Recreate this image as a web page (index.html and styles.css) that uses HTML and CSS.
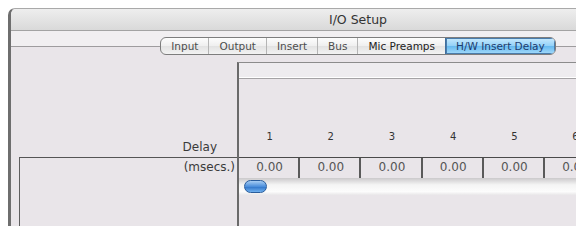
FILE: index.html
```html
<!DOCTYPE html>
<html lang="en">
<head>
  <meta charset="UTF-8">
  <title>I/O Setup</title>
  <link rel="stylesheet" href="styles.css">
</head>
<body>
  <div class="window">
    <div class="titlebar">I/O Setup</div>
    <div class="tabbar">
      <div class="tabs">
        <span class="tab">Input</span>
        <span class="tab">Output</span>
        <span class="tab">Insert</span>
        <span class="tab">Bus</span>
        <span class="tab strong">Mic Preamps</span>
        <span class="tab active">H/W Insert Delay</span>
      </div>
    </div>
    <div class="content">
      <div class="labels">
        <div class="label-head">Delay</div>
        <div class="label-box"><span>(msecs.)</span></div>
      </div>
      <div class="panel">
        <div class="panel-strip"></div>
        <div class="col-nums">
          <span>1</span><span>2</span><span>3</span><span>4</span><span>5</span><span>6</span>
        </div>
        <div class="values">
          <span>0.00</span><span>0.00</span><span>0.00</span><span>0.00</span><span>0.00</span><span>0.00</span>
        </div>
        <div class="scroll"><span class="thumb"></span></div>
      </div>
    </div>
  </div>
</body>
</html>
```

FILE: styles.css
```css
body {
  margin: 0;
  background: #fff;
  overflow: hidden;
  font-family: "DejaVu Sans", sans-serif;
}
.window {
  margin: 8px 0 0 8px;
  width: 697px;
  height: 218px;
  box-sizing: border-box;
  border-left: 3px solid #6e6e6e;
  border-top: 1px solid #a9a9a9;
  border-top-left-radius: 7px;
  background: #e9e5e9;
  display: flex;
  flex-direction: column;
}
.titlebar {
  height: 21px;
  line-height: 21px;
  text-align: center;
  font-size: 12.5px;
  color: #333;
  border-bottom: 1px solid #a3a3a3;
  border-top-left-radius: 5px;
  background: linear-gradient(#eeeeee, #d9d9d9);
}
.tabbar {
  height: 24px;
  box-sizing: border-box;
  padding-top: 6px;
  display: flex;
  justify-content: center;
  background: linear-gradient(to bottom, #f1eff1 0, #f1eff1 15px, #9e9c9e 15px, #9e9c9e 16px, transparent 16px);
}
.tabs {
  display: flex;
  height: 18px;
  box-sizing: border-box;
  border: 1px solid #7d7d7d;
  border-radius: 6px;
  overflow: hidden;
  background: linear-gradient(#fdfdfd, #efefef 50%, #e2e2e2 51%, #f3f3f3);
}
.tab {
  padding: 0 10px;
  line-height: 16px;
  font-size: 10.5px;
  color: #4d4d4d;
  border-left: 1px solid #b5b5b5;
}
.tab:first-child {
  border-left: none;
}
.tab.strong {
  color: #222;
}
.tab.active {
  color: #1e3c6e;
  border-left-color: #3f6f9e;
  box-shadow: inset 0 0 0 1px #4a7cab;
  background: linear-gradient(#c8eafd, #93d1f8 50%, #66b9ef 51%, #a5dbfb);
}
.content {
  flex: 1;
  display: flex;
  padding-top: 7px;
}
.labels {
  width: 226px;
  display: flex;
  flex-direction: column;
  font-size: 12px;
  color: #3a3a3a;
}
.label-head {
  height: 95px;
  box-sizing: border-box;
  display: flex;
  align-items: flex-end;
  justify-content: flex-end;
  padding: 0 20px 3px 0;
  line-height: 14px;
}
.label-box {
  flex: 1;
  margin-left: 8px;
  border-top: 1px solid #555;
  border-left: 1px solid #5e5e5e;
  text-align: right;
  padding-right: 2px;
  line-height: 18px;
}
.panel {
  flex: 1;
  border-left: 2px solid #6a6a6a;
  border-top: 1px solid #8c8c8c;
  display: flex;
  flex-direction: column;
}
.panel-strip {
  height: 14px;
  background: #eeecef;
  border-bottom: 1px solid #fff;
}
.col-nums {
  height: 79px;
  box-sizing: border-box;
  border-top: 1px solid #a5a3a5;
  display: flex;
  align-items: flex-end;
  padding-bottom: 14px;
  font-size: 10px;
  line-height: 12px;
  color: #333;
}
.col-nums span,
.values span {
  flex: 0 0 61.2px;
  text-align: center;
}
.values {
  height: 21px;
  box-sizing: border-box;
  border-top: 1px solid #4a4a4a;
  display: flex;
  font-size: 12px;
  line-height: 18px;
  color: #555;
}
.values span {
  box-sizing: border-box;
  border-right: 2px solid #5a5a5a;
  padding-left: 2px;
}
.scroll {
  height: 17px;
  background: linear-gradient(#cbc9cb, #f4f4f4 40%, #fcfcfc 80%, #e9e7e9);
}
.thumb {
  display: block;
  width: 23px;
  height: 13px;
  margin: 2px 0 0 5px;
  box-sizing: border-box;
  border: 1px solid #2a5d9c;
  border-radius: 7px;
  background: linear-gradient(#a7cdf3, #4c8fdc 50%, #2f73c8 51%, #6fb0ee);
}
```
